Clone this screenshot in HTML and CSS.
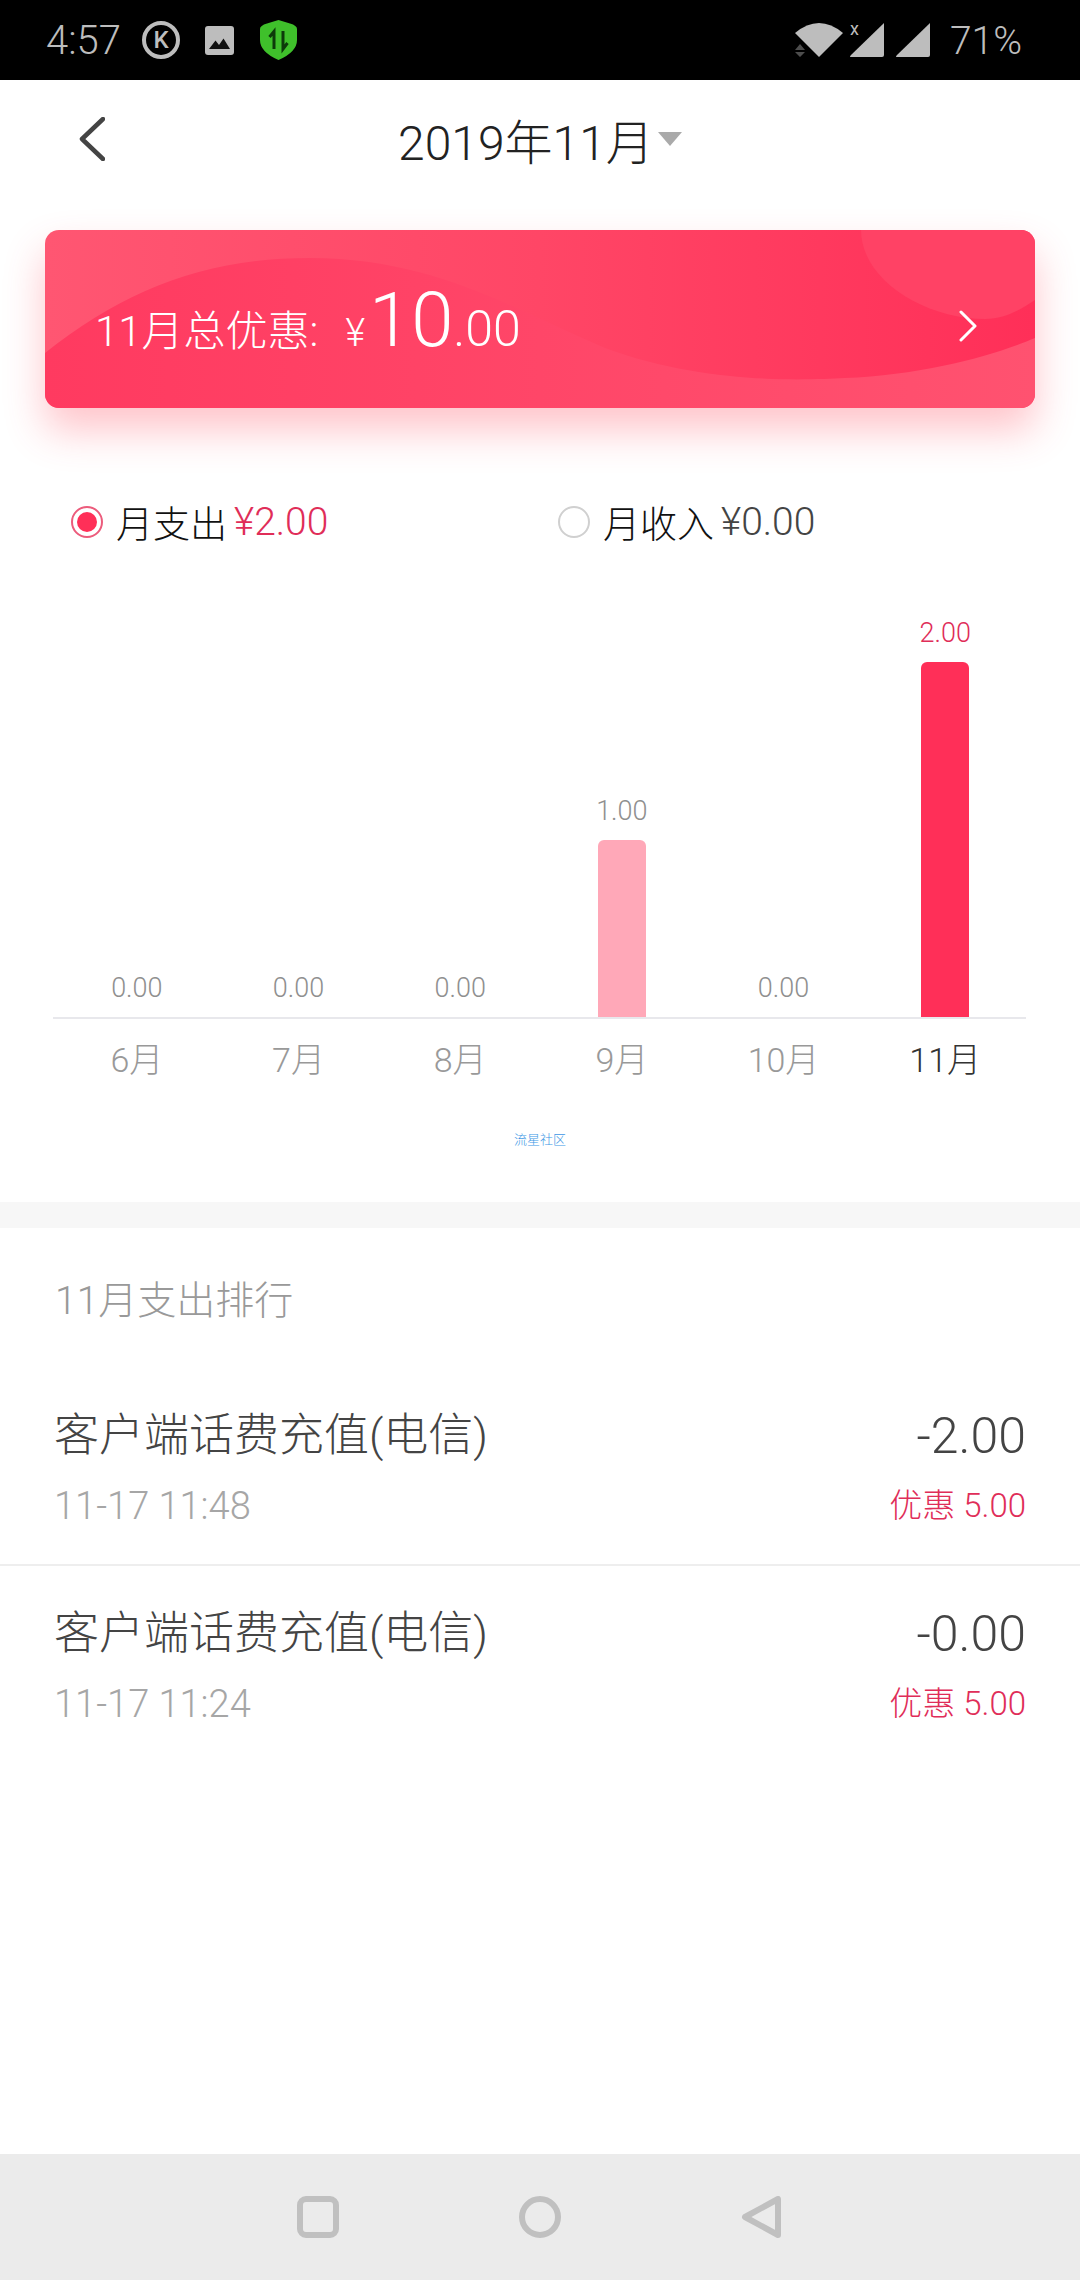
FILE: index.html
```html
<!DOCTYPE html>
<html lang="zh-CN">
<head>
  <meta charset="UTF-8">
  <meta name="viewport" content="width=device-width, initial-scale=1.0">
  <title>2019年11月</title>
  <link rel="stylesheet" href="styles.css">
</head>
<body>
  <div class="status-bar">
    <div class="status-left">
      <span class="status-time">4:57</span>
      <span class="status-k">K</span>
      <svg class="status-image" width="29" height="29" viewBox="0 0 29 29">
        <rect width="29" height="29" rx="3" fill="#bdbdbd"/>
        <path d="M4 23 L10.5 14.5 L14 19 L18.5 12.5 L25 23 Z" fill="#111"/>
      </svg>
      <svg class="status-shield" width="37" height="40" viewBox="0 0 37 40">
        <path d="M18.5 0 L30 3.5 Q37 5.5 37 9 V20 Q37 32 18.5 40 Q0 32 0 20 V9 Q0 5.5 7 3.5 Z" fill="#3fc02b"/>
        <path d="M14 29 V15 M9.5 17 L14 11.5 V29 M23 11 V27 M27.5 23 L23 29 V11" fill="none" stroke="#0d3a0a" stroke-width="3"/>
      </svg>
    </div>
    <div class="status-right">
      <svg class="status-wifi" width="48" height="34" viewBox="0 0 48 34">
        <path d="M24 34 L0 10 Q24 -10 48 10 Z" fill="#bdbdbd"/>
        <path d="M0 27 L5 21 L10 27 Z M0 29 L10 29 L5 34 Z" fill="#4d4d4d"/>
      </svg>
      <div class="status-signal">
        <svg width="34" height="34" viewBox="0 0 34 34">
          <path d="M34 0 V32 Q34 34 32 34 H1 Q-1 34 1 32 Z" fill="#bdbdbd"/>
        </svg>
        <span class="status-x">x</span>
      </div>
      <div class="status-signal">
        <svg width="34" height="34" viewBox="0 0 34 34">
          <path d="M34 0 V32 Q34 34 32 34 H1 Q-1 34 1 32 Z" fill="#bdbdbd"/>
        </svg>
      </div>
      <span class="status-battery">71%</span>
    </div>
  </div>

  <div class="page">
    <div class="nav">
      <svg class="nav-back" width="26" height="44" viewBox="0 0 26 44">
        <path d="M24 2 L3 22 L24 42" fill="none" stroke="#444" stroke-width="4.5" stroke-linecap="round" stroke-linejoin="round"/>
      </svg>
      <div class="nav-title">2019年11月<span class="nav-caret"></span></div>
    </div>

    <div class="summary-card">
      <svg class="summary-bg" viewBox="0 0 990 178" preserveAspectRatio="none">
        <defs>
          <linearGradient id="waveFill" x1="0" y1="0" x2="1" y2="0">
            <stop offset="0" stop-color="#ff3a60"/>
            <stop offset="1" stop-color="#ff5270"/>
          </linearGradient>
        </defs>
        <path d="M0 123 C80 60 160 28 265 28 C390 28 470 80 560 118 C660 155 760 150 800 148 C880 145 950 125 990 108 V178 H0 Z" fill="url(#waveFill)"/>
        <path d="M816 0 C816 50 880 89 940 89 C960 89 975 80 990 70 V0 Z" fill="#ff4265"/>
      </svg>
      <div class="summary-text">
        <span class="summary-label">11月总优惠:</span>
        <span class="summary-yen">¥</span>
        <span class="summary-big">10</span><span class="summary-cents">.00</span>
      </div>
      <svg class="summary-arrow" width="18" height="32" viewBox="0 0 18 32">
        <path d="M2 2 L16 16 L2 30" fill="none" stroke="#fff" stroke-width="3" stroke-linecap="round" stroke-linejoin="round"/>
      </svg>
    </div>

    <div class="legend">
      <div class="legend-item">
        <span class="radio radio-on"></span>
        <span class="legend-name">月支出</span>
        <span class="legend-value legend-red">¥2.00</span>
      </div>
      <div class="legend-item">
        <span class="radio"></span>
        <span class="legend-name">月收入</span>
        <span class="legend-value">¥0.00</span>
      </div>
    </div>

    <div class="chart">
      <div class="chart-bars">
        <div class="chart-col"><span class="chart-num">0.00</span></div>
        <div class="chart-col"><span class="chart-num">0.00</span></div>
        <div class="chart-col"><span class="chart-num">0.00</span></div>
        <div class="chart-col"><span class="chart-num">1.00</span><div class="bar bar-light" style="height: 177px"></div></div>
        <div class="chart-col"><span class="chart-num">0.00</span></div>
        <div class="chart-col"><span class="chart-num chart-num-red">2.00</span><div class="bar" style="height: 355px"></div></div>
      </div>
      <div class="chart-months">
        <span>6月</span>
        <span>7月</span>
        <span>8月</span>
        <span>9月</span>
        <span>10月</span>
        <span class="month-current">11月</span>
      </div>
    </div>

    <div class="watermark">流星社区</div>

    <div class="divider"></div>

    <div class="rank-title">11月支出排行</div>

    <div class="rank-row">
      <div class="rank-line">
        <span class="rank-name">客户端话费充值(电信)</span>
        <span class="rank-amount">-2.00</span>
      </div>
      <div class="rank-line rank-sub">
        <span class="rank-date">11-17 11:48</span>
        <span class="rank-discount">优惠 5.00</span>
      </div>
    </div>
    <div class="rank-row">
      <div class="rank-line">
        <span class="rank-name">客户端话费充值(电信)</span>
        <span class="rank-amount">-0.00</span>
      </div>
      <div class="rank-line rank-sub">
        <span class="rank-date">11-17 11:24</span>
        <span class="rank-discount">优惠 5.00</span>
      </div>
    </div>
  </div>

  <div class="nav-bar">
    <svg width="42" height="42" viewBox="0 0 42 42">
      <rect x="3" y="3" width="36" height="36" rx="6" fill="none" stroke="#c0c0c0" stroke-width="6"/>
    </svg>
    <svg width="42" height="42" viewBox="0 0 42 42">
      <circle cx="21" cy="21" r="18" fill="none" stroke="#c0c0c0" stroke-width="6"/>
    </svg>
    <svg width="42" height="42" viewBox="0 0 42 42">
      <path d="M37 3 V39 L4 21 Z" fill="none" stroke="#c0c0c0" stroke-width="6" stroke-linejoin="round"/>
    </svg>
  </div>
</body>
</html>
```

FILE: styles.css
```css
* {
  margin: 0;
  padding: 0;
  box-sizing: border-box;
}

body {
  width: 1080px;
  height: 2280px;
  display: flex;
  flex-direction: column;
  background: #fff;
  font-family: Roboto, "Noto Sans CJK SC", sans-serif;
  font-weight: 300;
  overflow: hidden;
}

/* status bar */
.status-bar {
  height: 80px;
  flex-shrink: 0;
  background: #000;
  color: #bdbdbd;
  display: flex;
  justify-content: space-between;
  align-items: center;
  padding: 0 58px 0 46px;
}

.status-left,
.status-right {
  display: flex;
  align-items: center;
}

.status-time {
  font-size: 40px;
  width: 76px;
  line-height: 44px;
  margin-top: 2px;
}

.status-k {
  width: 38px;
  height: 38px;
  margin-left: 20px;
  border: 4px solid #bdbdbd;
  border-radius: 50%;
  display: flex;
  align-items: center;
  justify-content: center;
  font-size: 24px;
  font-weight: 500;
}

.status-image {
  margin-left: 25px;
}

.status-shield {
  margin-left: 26px;
}

.status-wifi {
  margin-right: 7px;
}

.status-signal {
  position: relative;
  height: 34px;
  margin-right: 12px;
}

.status-signal svg {
  display: block;
}

.status-x {
  position: absolute;
  left: 0;
  top: 0;
  font-size: 18px;
  line-height: 12px;
  font-weight: 400;
}

.status-battery {
  font-size: 39px;
  line-height: 44px;
  margin-top: 2px;
  margin-left: 8px;
}

/* header */
.page {
  flex: 1;
}

.nav {
  height: 118px;
  position: relative;
  display: flex;
  align-items: center;
  justify-content: center;
}

.nav-back {
  position: absolute;
  left: 79px;
  top: 37px;
}

.nav-title {
  font-size: 48px;
  color: #222;
  display: flex;
  align-items: center;
  margin-left: 0;
}

.nav-caret {
  width: 0;
  height: 0;
  margin-left: 4px;
  border-left: 12px solid transparent;
  border-right: 12px solid transparent;
  border-top: 14px solid #aaa;
}

/* summary card */
.summary-card {
  position: relative;
  height: 178px;
  margin: 32px 45px 0;
  border-radius: 14px;
  background: linear-gradient(90deg, #ff5672 0%, #ff4666 50%, #ff2f58 100%);
  box-shadow: 0 22px 40px rgba(255, 70, 90, 0.32);
  display: flex;
  align-items: center;
  justify-content: space-between;
  padding: 0 58px 0 50px;
  overflow: hidden;
  color: #fff;
}

.summary-bg {
  position: absolute;
  inset: 0;
  width: 100%;
  height: 100%;
}

.summary-text {
  position: relative;
  display: flex;
  align-items: baseline;
  margin-top: 2px;
}

.summary-label {
  font-size: 42px;
}

.summary-yen {
  font-size: 38px;
  margin-left: 27px;
}

.summary-big {
  font-size: 76px;
  margin-left: 4px;
}

.summary-cents {
  font-size: 50px;
}

.summary-arrow {
  position: relative;
  margin-top: 14px;
}

/* legend */
.legend {
  display: flex;
  height: 62px;
  margin-top: 83px;
  padding-left: 71px;
}

.legend-item {
  width: 487px;
  display: flex;
  align-items: center;
  font-size: 37px;
  color: #111;
}

.radio {
  width: 32px;
  height: 32px;
  border: 2px solid #d0d0d0;
  border-radius: 50%;
  margin-right: 13px;
  background: #fff;
}

.radio-on {
  border-color: #ec5c7c;
  padding: 4px;
  background: #ff2f58;
  background-clip: content-box;
}

.legend-value {
  margin-left: 7px;
  font-size: 39px;
  color: #444;
}

.legend-red {
  color: #e02d58;
}

/* chart */
.chart {
  margin: 0 54px 0 53px;
}

.chart-bars {
  height: 466px;
  display: grid;
  grid-template-columns: repeat(6, 1fr);
  align-items: end;
  border-bottom: 2px solid #e8e8ec;
  padding-left: 3px;
}

.chart-col {
  display: flex;
  flex-direction: column;
  align-items: center;
}

.chart-num {
  font-size: 27px;
  line-height: 30px;
  margin-bottom: 14px;
  color: #8f8f8f;
}

.chart-num-red {
  color: #e02d58;
}

.bar {
  width: 48px;
  background: #ff2f58;
  border-radius: 6px 6px 0 0;
}

.bar-light {
  background: #ffa8b8;
}

.chart-months {
  display: grid;
  grid-template-columns: repeat(6, 1fr);
  padding-top: 18px;
  padding-left: 3px;
  font-size: 34px;
  line-height: 46px;
  color: #999;
  text-align: center;
}

.month-current {
  color: #333;
}

.watermark {
  margin-top: 47px;
  font-size: 13px;
  line-height: 20px;
  color: #3d97e5;
  text-align: center;
}

.divider {
  height: 26px;
  margin-top: 52px;
  background: #f7f7f7;
}

/* ranking */
.rank-title {
  margin-top: 49px;
  margin-bottom: 43px;
  padding-left: 55px;
  font-size: 39px;
  line-height: 48px;
  color: #999;
}

.rank-row {
  padding: 40px 54px 36px;
  border-bottom: 2px solid #eee;
}

.rank-row:last-child {
  border-bottom: none;
}

.rank-line {
  display: flex;
  justify-content: space-between;
  align-items: center;
}

.rank-name {
  font-size: 45px;
  line-height: 56px;
  color: #444;
}

.rank-amount {
  font-size: 50px;
  line-height: 56px;
  color: #444;
}

.rank-sub {
  margin-top: 20px;
}

.rank-date {
  font-size: 38px;
  line-height: 44px;
  color: #a6a6a6;
}

.rank-discount {
  font-size: 33px;
  line-height: 44px;
  color: #e02d58;
}

/* android nav bar */
.nav-bar {
  height: 126px;
  flex-shrink: 0;
  background: #ebebeb;
  display: flex;
  justify-content: center;
  align-items: flex-start;
  gap: 180px;
  padding: 42px 0 0 0;
}
```
